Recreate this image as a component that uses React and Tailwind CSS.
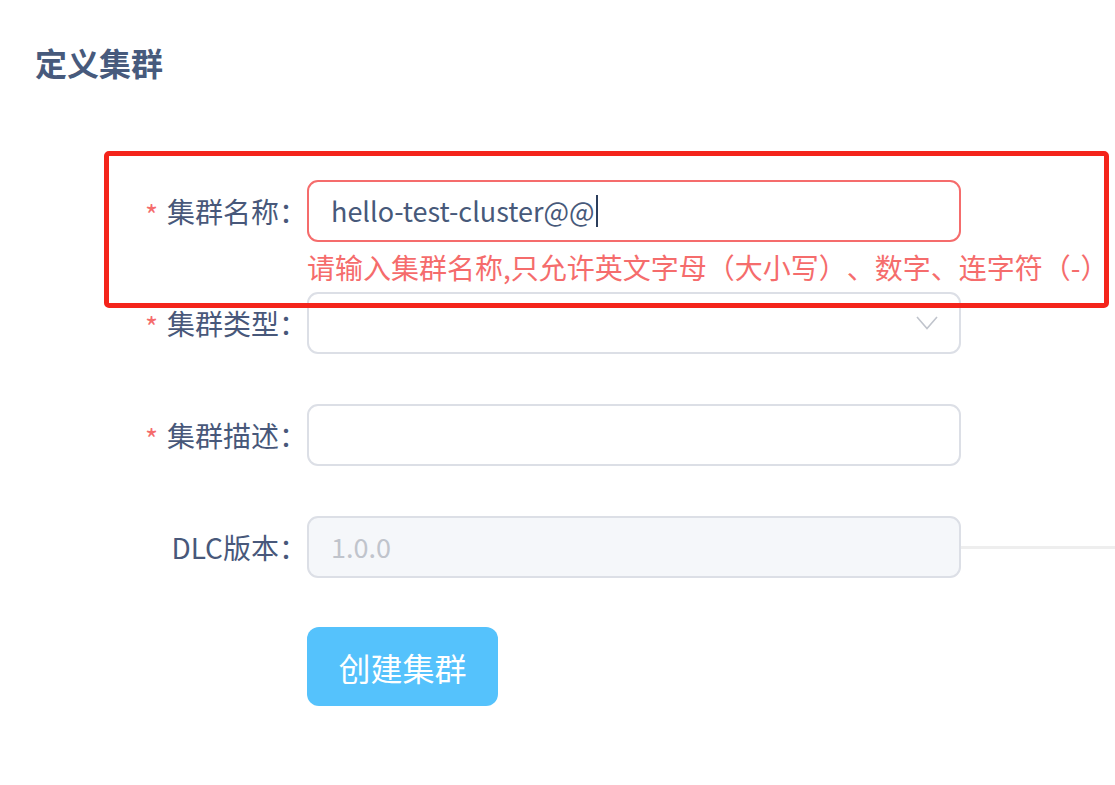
const FONT = { fontFamily: '"Noto Sans CJK SC", "Noto Sans", sans-serif' };

function Label({ required, children }) {
  return (
    <div className="w-[307px] shrink-0 flex items-center justify-end h-[62px] text-[28px] text-[#48587a] [text-spacing-trim:space-all]">
      {required && <span className="text-[#f56c6c] mr-[9px] text-[28px] leading-none pt-[6px]">*</span>}
      <span>{children}</span>
    </div>
  );
}

function Chevron() {
  return (
    <svg width="22" height="14" viewBox="0 0 22 14" fill="none">
      <polyline points="1,1 11,12.5 21,1" stroke="#c0c4cc" strokeWidth="1.6" />
    </svg>
  );
}

export default function App() {
  return (
    <div className="relative w-[1115px] h-[785px] bg-white overflow-hidden" style={FONT}>
      <div className="pl-[35px] pt-[38px]">
        <h1 className="text-[32px] font-bold text-[#475a7c] leading-[48px]">定义集群</h1>
      </div>

      <form className="flex flex-col mt-[94px]">
        <div className="flex">
          <Label required>集群名称：</Label>
          <div className="flex flex-col">
            <div className="w-[654px] h-[62px] rounded-[11px] border-2 border-[#f56c6c] flex items-center pl-[22px] text-[27px] text-[#47597a]">
              hello-test-cluster@@<span className="inline-block w-[2px] h-[32px] bg-[#2c3e5c] ml-[1px]" />
            </div>
            <div className="h-[50px] flex items-center text-[28px] text-[#f56c6c] whitespace-nowrap [text-spacing-trim:space-all]">
              请输入集群名称,只允许英文字母（大小写）、数字、连字符（-）
            </div>
          </div>
        </div>

        <div className="flex mb-[50px]">
          <Label required>集群类型：</Label>
          <div className="w-[654px] h-[62px] rounded-[11px] border-2 border-[#dcdfe6] flex items-center justify-end pr-[21px]">
            <Chevron />
          </div>
        </div>

        <div className="flex mb-[50px]">
          <Label required>集群描述：</Label>
          <div className="w-[654px] h-[62px] rounded-[11px] border-2 border-[#dcdfe6]" />
        </div>

        <div className="flex items-center mb-[49px]">
          <Label>DLC版本：</Label>
          <div className="w-[654px] h-[62px] rounded-[11px] border-2 border-[#dcdfe6] bg-[#f5f7fa] flex items-center px-[22px] text-[27px] text-[#c0c4cc]">
            1.0.0
          </div>
          <div className="flex-1 h-[3px] bg-[#eeeeee]" />
        </div>

        <div className="flex">
          <div className="w-[307px] shrink-0" />
          <button type="button" className="w-[191px] h-[79px] rounded-[12px] bg-[#55c2fc] text-white text-[32px]">
            创建集群
          </button>
        </div>
      </form>

      <div className="absolute left-[104px] top-[151px] w-[1005px] h-[157px] border-[5px] border-[#f4241b] rounded-[5px] pointer-events-none" />
    </div>
  );
}
